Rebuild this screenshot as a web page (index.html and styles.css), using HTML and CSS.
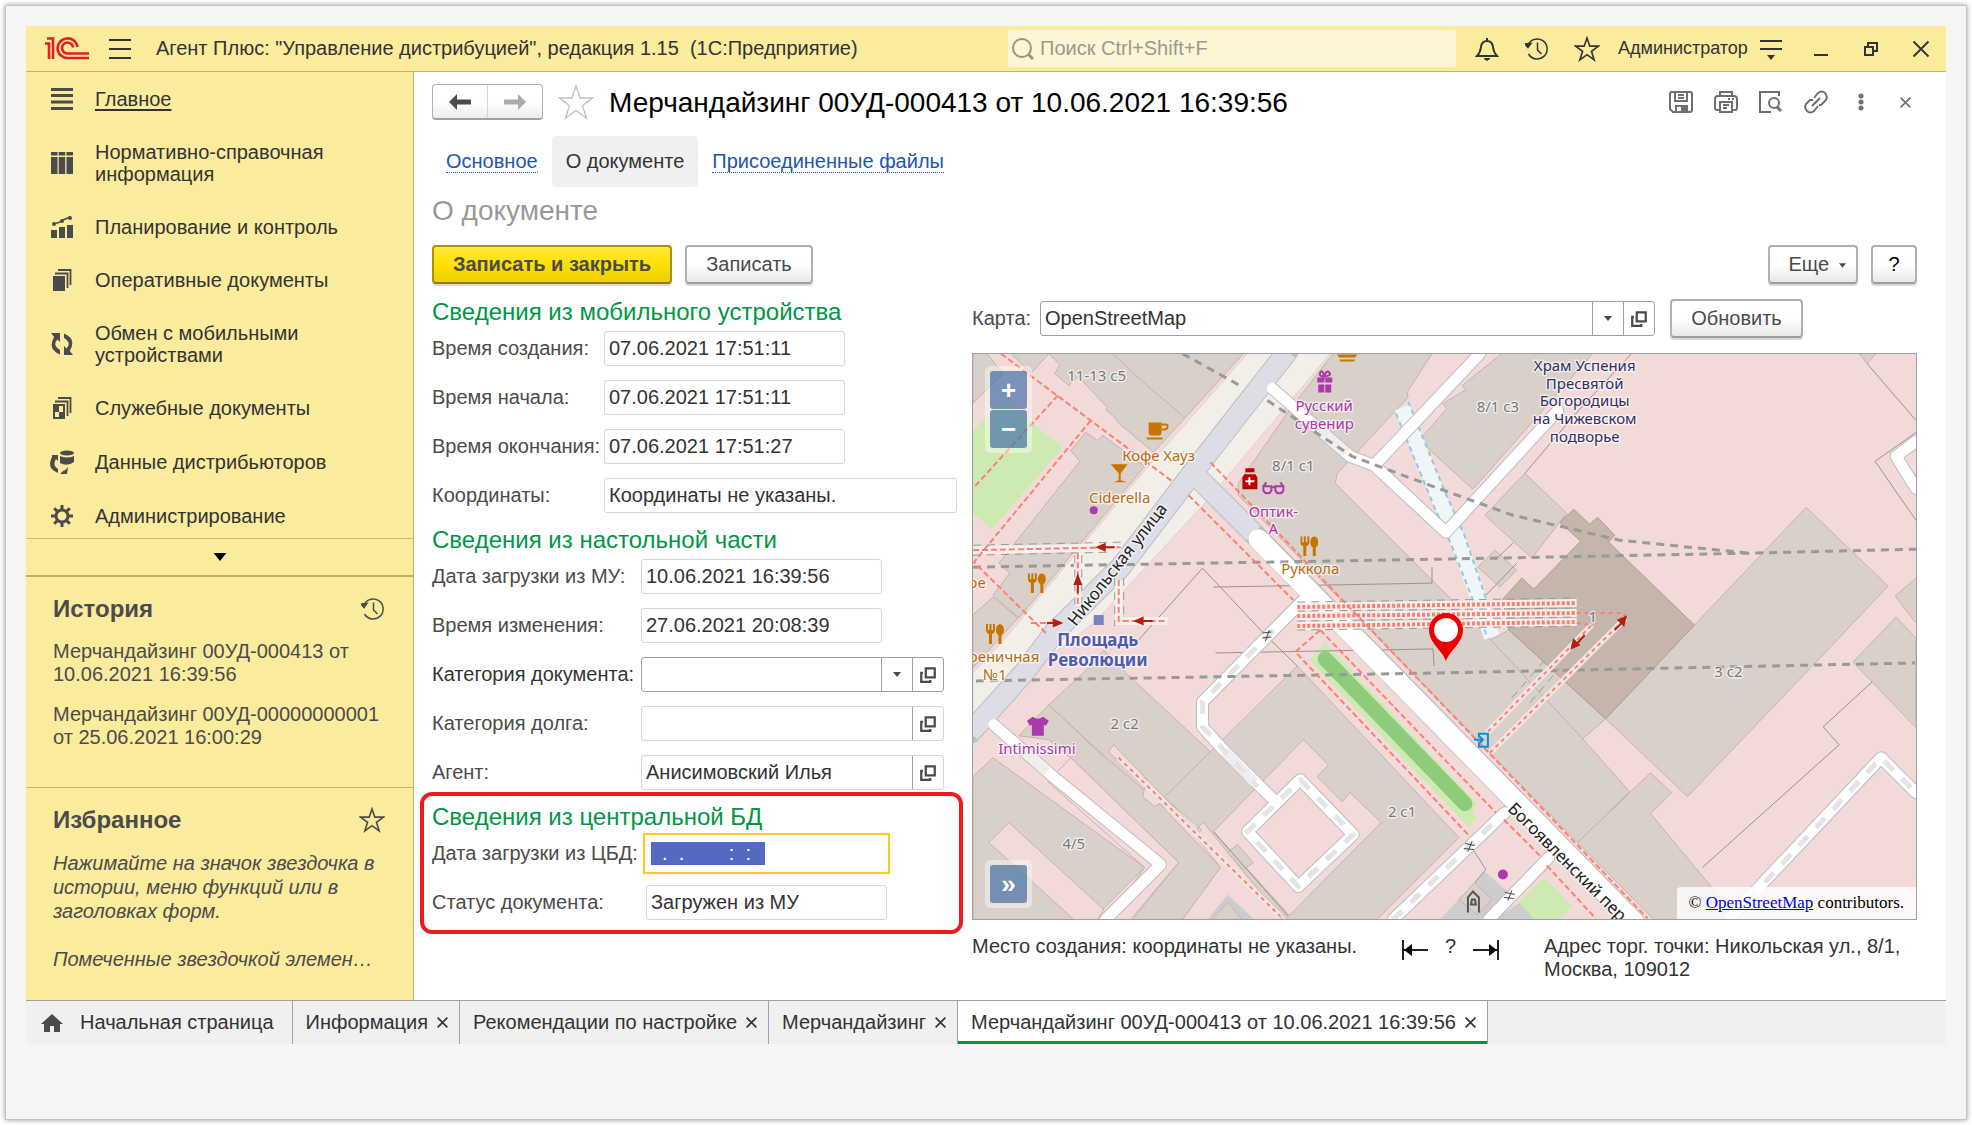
FILE: index.html
```html
<!DOCTYPE html>
<html lang="ru">
<head>
    <meta charset="UTF-8">
    <title>Агент Плюс: Управление дистрибуцией</title>
    <link rel="stylesheet" href="styles.css">
</head>
<body>
    <!-- Shared icons -->
    <svg class="sprite" width="0" height="0">
        <symbol id="i-star" viewBox="0 0 24 24"><path d="M12 1.8l2.6 7.6h8l-6.5 4.7 2.5 7.9-6.6-4.8L5.400 22l2.500-7.900L1.400 9.400h8z"/></symbol>
        <symbol id="i-history" viewBox="0 0 24 24"><path d="M2.600 9A10 10 0 1 1 3.500 17M12.500 5.500V13l4 4"/><path d="M0 7l6-.500-3 4z" fill="currentColor"/></symbol>
        <symbol id="i-close" viewBox="0 0 16 16"><path d="M2 2l12 12M14 2L2 14"/></symbol>
        <symbol id="i-open" viewBox="0 0 16 16"><path d="M6 2h8v8H6zM3.500 6H2v8h8v-1.500"/></symbol>
        <symbol id="i-down" viewBox="0 0 8 5"><path d="M0 0h8L4 5z"/></symbol>
        <symbol id="m-food" viewBox="0 0 18 20"><path d="M0 0h2v6h1.500V0h2v6H7V0h2v6q0 3-3 4v10H3V10Q0 9 0 6z"/><path d="M14 0q4 1 4 6 0 4-2.500 5v9h-3v-9Q10 10 10 6q0-5 4-6z"/></symbol>
    </svg>

    <div class="page">
        <div class="window">
            <header class="topbar">
                <svg class="logo" width="44" height="23" viewBox="0 0 44 23" fill="none" stroke="#e31e24" stroke-width="2.600">
                    <path d="M0 6.500h4V22M2 1.500h6V22"/>
                    <path d="M32.500 10A10 9.800 0 1 0 23 21H44M28 10.500A5.500 5.500 0 1 0 23 16.500H44"/>
                </svg>
                <button class="icon-btn burger" aria-label="Меню">
                    <svg width="22" height="22" viewBox="0 0 22 22" stroke="currentColor" stroke-width="2"><path d="M0 2h22M0 11h22M0 20h22"/></svg>
                </button>
                <span class="app-title">Агент Плюс: "Управление дистрибуцией", редакция 1.15&nbsp; (1С:Предприятие)</span>
                <div class="search">
                    <svg width="22" height="24" viewBox="0 0 22 24" fill="none" stroke="#9a9581" stroke-width="2"><circle cx="10" cy="11" r="9"/><path d="M16 17l5 5" stroke-width="3"/></svg>
                    <input type="text" placeholder="Поиск Ctrl+Shift+F" aria-label="Поиск">
                </div>
                <button class="icon-btn" aria-label="Уведомления">
                    <svg width="24" height="24" viewBox="0 0 24 24" fill="none" stroke="currentColor" stroke-width="2"><path d="M2 19h20c-3-3-3.500-5-4-9-.500-4-2.500-6-6-6s-5.500 2-6 6c-.500 4-1 6-4 9zM12 1v3"/><path d="M9 21.500h6l-3 2z" fill="currentColor" stroke-width="1"/></svg>
                </button>
                <button class="icon-btn" aria-label="История"><svg class="line" width="24" height="24"><use href="#i-history"/></svg></button>
                <button class="icon-btn" aria-label="Избранное"><svg class="line" width="26" height="26"><use href="#i-star"/></svg></button>
                <a href="#" class="user">Администратор</a>
                <button class="icon-btn" aria-label="Сервис">
                    <svg width="22" height="22" viewBox="0 0 22 22" stroke="currentColor" stroke-width="2"><path d="M0 3h22M0 11h22"/><path d="M7 17h8l-4 5z" fill="currentColor" stroke="none"/></svg>
                </button>
                <button class="icon-btn" aria-label="Свернуть">
                    <svg width="14" height="16" viewBox="0 0 14 16" stroke="currentColor" stroke-width="2"><path d="M0 14h14"/></svg>
                </button>
                <button class="icon-btn" aria-label="Развернуть">
                    <svg width="14" height="14" viewBox="0 0 14 14" fill="none" stroke="currentColor" stroke-width="2"><path d="M1 5h8v8H1zM4 5V1h9v8H9"/></svg>
                </button>
                <button class="icon-btn" aria-label="Закрыть"><svg class="line" width="20" height="20"><use href="#i-close"/></svg></button>
            </header>

            <div class="workspace">
                <aside class="sidebar">
                    <nav class="sections">
                        <a href="#" class="section-link current">
                            <svg width="22" height="22" viewBox="0 0 22 22"><path d="M0 0h22v3H0zM0 6h22v3H0zM0 12.500h22v3H0zM0 19h22v3H0z"/></svg>
                            <span>Главное</span>
                        </a>
                        <a href="#" class="section-link">
                            <svg width="22" height="22" viewBox="0 0 22 22"><path d="M0 0h6.500v3.500H0zM7.700 0h6.500v3.500H7.700zM15.500 0H22v3.500h-6.500zM0 5h6.500v17H0zM7.700 5h6.500v17H7.700zM15.500 5H22v17h-6.500z"/></svg>
                            <span>Нормативно-справочная информация</span>
                        </a>
                        <a href="#" class="section-link">
                            <svg width="22" height="22" viewBox="0 0 22 22"><path d="M0 14h6v8H0zM8 11h6v11H8zM16 9h6v13h-6z"/><path d="M3 8l6-2 3-2 7-3" fill="none" stroke="#4b4b4b" stroke-width="1.500"/><circle cx="3" cy="8" r="2"/><circle cx="11" cy="5" r="2"/><circle cx="19" cy="2" r="2"/></svg>
                            <span>Планирование и контроль</span>
                        </a>
                        <a href="#" class="section-link">
                            <svg width="22" height="22" viewBox="0 0 22 22"><path d="M2 7h12v15H2z"/><path d="M4 4.500h12.500V19M7 1h12.500v15" fill="none" stroke="#4b4b4b" stroke-width="1.800"/></svg>
                            <span>Оперативные документы</span>
                        </a>
                        <a href="#" class="section-link">
                            <svg width="22" height="22" viewBox="0 0 22 22"><path d="M0 0h9v9L6.500 6.500Q1 12 9 17v4.500Q-4 16 3.200 4zM22 22h-9v-9l2.500 2.500Q21 10 13 5V.500Q26 6 18.800 18z"/></svg>
                            <span>Обмен с мобильными устройствами</span>
                        </a>
                        <a href="#" class="section-link">
                            <svg width="22" height="22" viewBox="0 0 22 22"><path d="M2 7h12v15H2z"/><path d="M8 9h4v6H8zM4 15h4v5H4z" fill="#fbeb9d"/><path d="M4 4.500h12.500V19M7 1h12.500v15" fill="none" stroke="#4b4b4b" stroke-width="1.800"/></svg>
                            <span>Служебные документы</span>
                        </a>
                        <a href="#" class="section-link">
                            <svg width="24" height="24" viewBox="0 0 24 24"><ellipse cx="17" cy="3" rx="7" ry="2.500"/><path d="M10 6q7 3 14 0v6q-7 5-14 1zM2 5h6v6L6 9q-4 6 2 10v4Q-4 18 2 7zM18 17l-1 7h-7l3-3q3-1 5-4z"/></svg>
                            <span>Данные дистрибьюторов</span>
                        </a>
                        <a href="#" class="section-link">
                            <svg width="22" height="22" viewBox="0 0 22 22"><circle cx="11" cy="11" r="6" fill="none" stroke="#4b4b4b" stroke-width="3"/><path d="M11 0v4M11 18v4M0 11h4M18 11h4M3.200 3.200l3 3M15.800 15.800l3 3M3.200 18.800l3-3M15.800 6.200l3-3" stroke="#4b4b4b" stroke-width="3"/></svg>
                            <span>Администрирование</span>
                        </a>
                    </nav>
                    <button class="more-sections" aria-label="Еще разделы"><svg width="14" height="8"><use href="#i-down"/></svg></button>

                    <section class="side-block history">
                        <div class="side-head">
                            <h2>История</h2>
                            <svg class="line" width="24" height="24"><use href="#i-history"/></svg>
                        </div>
                        <a href="#">Мерчандайзинг 00УД-000413 от 10.06.2021 16:39:56</a>
                        <a href="#">Мерчандайзинг 00УД-00000000001 от 25.06.2021 16:00:29</a>
                    </section>

                    <section class="side-block favorites">
                        <div class="side-head">
                            <h2>Избранное</h2>
                            <svg class="line" width="26" height="26"><use href="#i-star"/></svg>
                        </div>
                        <p>Нажимайте на значок звездочка в истории, меню функций или в заголовках форм.</p>
                        <p class="clipped">Помеченные звездочкой элементы появятся здесь.</p>
                    </section>
                </aside>

                <main class="document">
                    <div class="doc-head">
                        <div class="nav-buttons">
                            <button aria-label="Назад"><svg width="22" height="16" viewBox="0 0 22 16"><path d="M0 8l8-8v5.500h14v5H8V16z" fill="#4b4b4b"/></svg></button>
                            <button aria-label="Вперед"><svg width="22" height="16" viewBox="0 0 22 16"><path d="M22 8l-8-8v5.500H0v5h14V16z" fill="#aaaaaa"/></svg></button>
                        </div>
                        <button class="fav-btn" aria-label="В избранное"><svg width="36" height="36" viewBox="0 0 36 36" fill="none" stroke="#bcc0c6" stroke-width="1.300"><path d="M18 2l4.200 12h12.300l-10 7.700 4 12.300L18 26.500 7.500 34l4-12.300-10-7.700h12.300z"/></svg></button>
                        <h1>Мерчандайзинг 00УД-000413 от 10.06.2021 16:39:56</h1>
                        <div class="doc-tools">
                            <button aria-label="Сохранить"><svg width="24" height="22" viewBox="0 0 24 22"><path d="M3 1h18q2 0 2 2v16q0 2-2 2H4l-3-3V3q0-2 2-2zM6 1v9h12V1M9 4h6M9 7h6M7 21v-6h11v6"/><path d="M13 16h3v4h-3z" fill="#6f6f6f"/></svg></button>
                            <button aria-label="Печать"><svg width="24" height="22" viewBox="0 0 24 22"><path d="M6 5V1h12v4M6 19H3q-2 0-2-2V8q0-3 3-3h16q3 0 3 3v9q0 2-2 2h-3M6 11h12v10H6zM9 14h6M9 17h4M14 8h2M18 8h2"/></svg></button>
                            <button aria-label="Просмотр"><svg width="24" height="22" viewBox="0 0 24 22"><path d="M20 5V1H1v20h11"/><circle cx="15" cy="12" r="5"/><path d="M18 16l4 4" stroke-width="3"/></svg></button>
                            <button aria-label="Ссылка"><svg width="24" height="24" viewBox="0 0 24 24"><path d="M10 8l4-5q4-3 7 0t1 7l-5 5h-2M14 16l-4 5q-4 3-7 0t-1-7l4-4h3M8 16l8-8"/></svg></button>
                            <button aria-label="Еще"><svg width="6" height="18" viewBox="0 0 6 18" class="dots"><circle cx="3" cy="3" r="2.500"/><circle cx="3" cy="9" r="2.500"/><circle cx="3" cy="15" r="2.500"/></svg></button>
                            <button aria-label="Закрыть"><svg width="13" height="13"><use href="#i-close"/></svg></button>
                        </div>
                    </div>

                    <nav class="doc-tabs">
                        <a href="#"><span>Основное</span></a>
                        <a href="#" class="active">О документе</a>
                        <a href="#"><span>Присоединенные файлы</span></a>
                    </nav>

                    <h2 class="subtitle">О документе</h2>

                    <div class="commands">
                        <button class="btn btn-primary">Записать и закрыть</button>
                        <button class="btn">Записать</button>
                        <button class="btn btn-more">Еще <svg width="7" height="5"><use href="#i-down"/></svg></button>
                        <button class="btn btn-help">?</button>
                    </div>

                    <div class="doc-body">
                        <form class="details">
                            <div class="group mobile">
                                <h3>Сведения из мобильного устройства</h3>
                                <div class="row"><label for="created">Время создания:</label><input id="created" class="field" type="text" value="07.06.2021 17:51:11" readonly></div>
                                <div class="row"><label for="started">Время начала:</label><input id="started" class="field" type="text" value="07.06.2021 17:51:11" readonly></div>
                                <div class="row"><label for="ended">Время окончания:</label><input id="ended" class="field" type="text" value="07.06.2021 17:51:27" readonly></div>
                                <div class="row"><label for="coords">Координаты:</label><input id="coords" class="field wide" type="text" value="Координаты не указаны." readonly></div>
                            </div>

                            <div class="group desktop">
                                <h3>Сведения из настольной части</h3>
                                <div class="row"><label for="loaded">Дата загрузки из МУ:</label><input id="loaded" class="field" type="text" value="10.06.2021 16:39:56" readonly></div>
                                <div class="row"><label for="changed">Время изменения:</label><input id="changed" class="field" type="text" value="27.06.2021 20:08:39" readonly></div>
                                <div class="row">
                                    <label for="category" class="editable">Категория документа:</label>
                                    <div class="combo editable">
                                        <select id="category"><option></option></select>
                                        <span class="combo-part"><svg width="8" height="5"><use href="#i-down"/></svg></span>
                                        <button type="button" class="combo-part" aria-label="Открыть"><svg class="open" width="18" height="18"><use href="#i-open"/></svg></button>
                                    </div>
                                </div>
                                <div class="row">
                                    <label for="debt">Категория долга:</label>
                                    <div class="combo">
                                        <input id="debt" type="text" readonly>
                                        <button type="button" class="combo-part" aria-label="Открыть"><svg class="open" width="18" height="18"><use href="#i-open"/></svg></button>
                                    </div>
                                </div>
                                <div class="row">
                                    <label for="agent">Агент:</label>
                                    <div class="combo">
                                        <input id="agent" type="text" value="Анисимовский Илья" readonly>
                                        <button type="button" class="combo-part" aria-label="Открыть"><svg class="open" width="18" height="18"><use href="#i-open"/></svg></button>
                                    </div>
                                </div>
                            </div>

                            <div class="group central">
                                <h3>Сведения из центральной БД</h3>
                                <div class="row"><label for="central-date">Дата загрузки из ЦБД:</label><div class="focused"><input id="central-date" type="text" value="  .  .        :  :  "></div></div>
                                <div class="row"><label for="status">Статус документа:</label><input id="status" class="field" type="text" value="Загружен из МУ" readonly></div>
                            </div>
                        </form>

                        <div class="map-side">
                            <div class="map-bar">
                                <label for="provider">Карта:</label>
                                <div class="combo editable">
                                    <select id="provider"><option>OpenStreetMap</option></select>
                                    <span class="combo-part"><svg width="8" height="5"><use href="#i-down"/></svg></span>
                                    <button class="combo-part" aria-label="Открыть"><svg class="open" width="18" height="18"><use href="#i-open"/></svg></button>
                                </div>
                                <button class="btn btn-refresh">Обновить</button>
                            </div>

                            <div class="map">
                                <svg class="map-canvas" viewBox="0 0 945 567" preserveAspectRatio="xMidYMid slice">
                                    <rect width="945" height="567" fill="#f2dad9"/>

                                    <!-- buildings -->
                                    <g class="building">
                                        <path d="M0 0h14l16 20L0 50zM38 0h38L58 20z"/>
                                        <path d="M76 0l11 11-5 9 14 12 9-9 30 31-2 2 10 9 2 4 36 30L271 0z"/>
                                        <path d="M140 0l31 29 41 35"/>
                                        <path d="M113 79l12 8 5-5 42 31L46 265l-26-23 17-22-11-10 81-102-9-11z"/>
                                        <path d="M20 244l25 21-45 50v-53z"/>
                                        <path d="M361 0h99l-25 39 1 5-71 76-2 10 107 107 49 50 92 99 47 53-52 51L266 142v-12l50-72z"/>
                                        <path d="M530 0l-40 32 4 4-23 14 4 5-28 32 54 49L621 0z"/>
                                        <path d="M553 120l42 40-35 45-47-43zM523 197l22 20-17 17-22-20z"/>
                                        <path d="M537 277l97 89-23 20-92-99z"/>
                                        <path d="M835 154l82 79-51 54-150 157-82-78 89-94zM945 225l-21 18 21 27M925 264l20 21v90l-63-66zM888 0l8 10 9-10z"/>
                                        <path d="M679 420l21 20-21 21 88 106h-85l-76-77z"/>
                                        <path d="M76 352l42-39 13-16 22 23 85 79 87-86 162 172-82 82H316L210 465l-20-12-14-2-45-48z"/>
                                        <path d="M238 399l-46 45"/>
                                        <path d="M0 424l20-19 152 110-42 42-10 10H0z"/>
                                        <path d="M76 352l54 51 6 4 50 43 62 65-38 52h-50l46-57L98 405l-22-18-30-4z"/>
                                    </g>
                                    <g class="yard">
                                        <path d="M331 387l25 25-11 12 25 25 8-9 31 30-92 93-76-84z"/>
                                        <path d="M36 470l95 87-6 10h-24L16 490z"/>
                                        <path d="M141 392l-5 7 24 24 14 3-4 18 12 10 12-7 35 30-6 7 25 31-38 52h100L231 470l-8 7z"/>
                                        <path d="M98 405l108 105-48 57h-23l37-52-97-86z"/>
                                    </g>
                                    <path class="building" d="M265 492l16 18-10 7-16-17z"/>
                                    <path class="church" d="M602 156l16 15 8-7 17 18-6 7 86 83-89 94-97-89-6-31 19-21 12 11 47-48-21-19z"/>
                                    <path d="M255 542l-20 25h47zM513 519l-45 48h40l33-23zM550 549l-28 18h48z" fill="#cdcdcd"/>
                                    <path class="building" d="M503 530l17 17-15 15-18-15zM255 550l-15 17h30z"/>

                                    <!-- greenery -->
                                    <path d="M31 47l59 47-71 82-19-16V77zM353 290l-16 17 160 168 8-10-6-6 6-8zM573 525l28 29-13 13h-26l-15-18z" fill="#cdebb0"/>
                                    <path d="M353 306l140 145" stroke="#8ecb7b" stroke-width="15" stroke-linecap="round"/>

                                    <!-- Nikolskaya street -->
                                    <path d="M275 0l-97 110L31 287 0 320v74l20-24 48-60 53-40 114-123L358 0z" fill="#f2efe9" stroke="#ddd3cd"/>
                                    <g class="thin"><path d="M241 234l219-4v-16M243 300l218-4 1 17M166 287l64-72 61 65 34 33M241 479l75 85M896 10l49 57M945 79l-41 29 41 59M660 0l-55 59-52 61M541 190l-18 17M545 210l-60 62M901 329l-49 45 16 18-137 123M499 494l15 23-11 13"/></g>

                                    <!-- glass passage -->
                                    <path d="M430 54l38 93 18 40 34 97" stroke="#f0f6f7" stroke-width="16" fill="none"/>
                                    <path d="M436 48l38 93 18 40 26 76M424 60l38 93 18 40 35 90" stroke="#8fcbdc" stroke-width="2" stroke-dasharray="5 4" fill="none"/>

                                    <!-- roads -->
                                    <g class="casing">
                                        <path d="M315-2l-93 119-74 97-67 66-30 40-54 60" stroke-width="22"/>
                                        <path d="M221 120l60 60 373 381 8 8" stroke-width="22"/>
                                        <path d="M300 35l78 68 24 9L508 0M402 112l72 67L586 57M945 88l-20 15 20 32" stroke-width="13"/>
                                        <path d="M21 372l57 50 110 90-55 55M331 247l-101 102v25l18 20 52 52M328 427l53 55-55 52-51-55zM533 460l-112 107M577 505l-60 62M945 440l-35-35-151 160" stroke-width="13"/>
                                    </g>
                                    <path d="M315-2l-93 119-74 97-67 66-30 40-54 60M221 120l60 60" stroke="#dddde8" stroke-width="20" fill="none"/>
                                    <g class="road">
                                        <path d="M286 186l368 375 8 8" stroke-width="20"/>
                                        <path d="M300 35l78 68 24 9L508 0M402 112l72 67L586 57M945 88l-20 15 20 32" stroke-width="11"/>
                                        <path d="M21 372l57 50 110 90-55 55M331 247l-101 102v25l18 20 52 52M328 427l53 55-55 52-51-55zM533 460l-112 107M577 505l-60 62M945 440l-35-35-151 160" stroke-width="11"/>
                                    </g>
                                    <path d="M338 68l36 31M46 394l28 25M252 398l30 32" stroke="#eeeeee" stroke-width="10"/>
                                    <path d="M301 277l-71 72v25l55 60M328 427l53 55-55 52-51-55zM520 472l-99 95M940 435l-30-30-140 150" stroke="#e4e4e4" stroke-width="5" stroke-dasharray="13 12" fill="none"/>

                                    <!-- metro and railway tunnels -->
                                    <g class="rail">
                                        <path d="M210 0l61 34M295 47l85 56 78 29 83 30 107 25 130 13M0 214l468-8 310-6 167-4M3 328l465-8 476-10"/>
                                    </g>
                                    <g class="platform-back"><path d="M325 254l280-4M325 263l280-3M325 273l280-4M0 197l148-3M105 200v53M146 227v41h49"/></g>
                                    <g class="rail">
                                        <path d="M0 192l148-3M0 202l140-3M102 202v50M109 202v50M142 225v48M151 225v38M325 249l280-4M325 258l280-3M325 268l280-4M325 277l280-4M540 345l35-40M558 350l30-35" stroke-width="1"/>
                                    </g>
                                    <g class="platform"><path d="M325 254l280-4M325 263l280-3M325 273l280-4"/></g>

                                    <!-- footways -->
                                    <g class="path-back"><path d="M515 380L620 272M518 400L654 265M146 405l162 159"/></g>
                                    <g class="path">
                                        <path d="M28 0l173 129M85 42L1 134M118 67L1 209l74 73M238 109l438 457M216 142l105 105M348 277l-25 22 175 185M348 277l120 125 56 58M532 467l38 38M575 513l49 53"/>
                                        <path d="M0 197l148-3M105 200v53M146 227v41h49M58 270h30"/>
                                        <path d="M146 405l162 159M605 260h47l2 5-136 135M605 270l15 2-105 108" stroke-dasharray="4 4"/>
                                    </g>
                                    <g stroke="#b5200d" fill="#b5200d" stroke-width="2">
                                        <path d="M142 194h-14M105 240v-12M74 270h8M180 268h-12M643 277l8-8M613 282l-9 10"/>
                                        <path d="M125 194l7-3v6zM105 223l-3 8h6zM88 270l-7-3v6zM163 268l7-3v6zM654 264l-2 8-5-5zM600 295l2-8 5 5z"/>
                                    </g>
                                    <path d="M290 280l9-1M290 285l9-1M293 288l4-11M493 491l10 2M492 496l10 1M496 499l4-10M533 540l10 2M532 545l10 1M536 548l4-10" stroke="#444444"/>

                                    <!-- points of interest -->
                                    <g fill="#c77400">
                                        <use href="#m-food" x="328" y="183" width="18" height="20"/>
                                        <use href="#m-food" x="55" y="220" width="18" height="20"/>
                                        <use href="#m-food" x="13" y="271" width="18" height="20"/>
                                        <path d="M176 69h13v10q0 3-3 3h-7q-3 0-3-3zM174 84h16v2h-16zM138 111h17l-7 9v7l6 2h-13l5-2v-7zM365 1h20l-2 3h-16zM367 6h16l-1 2h-14z"/>
                                        <path d="M189 71h4q2 0 2 2t-2 3h-4" fill="none" stroke="#c77400" stroke-width="2"/>
                                    </g>
                                    <g fill="#ac39ac">
                                        <path d="M345 24h7v5h-7zM353 24h7v5h-7zM346 31h6v8h-6zM353 31h6v8h-6zM60 364q5 4 10 0l6 4-3 5-2-1v11H59v-11l-2 1-3-5z"/>
                                        <path d="M352 23q-6 0-4-4t4 4q2-7 5-4t-5 4M291 133l3-4M311 133l-3-4M291 133h8v4q-1 3-4 3t-4-3zM303 133h8v4q-1 3-4 3t-4-3zM299 134h4" fill="none" stroke="#ac39ac" stroke-width="2"/>
                                        <circle cx="121" cy="157" r="4"/><circle cx="531" cy="522" r="5"/>
                                    </g>
                                    <path d="M273 115h9v4h-9zM272 121h11l2 3v12h-15v-12z" fill="#bf0000"/>
                                    <path d="M277 124v8M273 128h9" stroke="#ffffff" stroke-width="2"/>
                                    <path d="M121 262h10v10h-10z" fill="#7b81bf"/>
                                    <path d="M507 385v-4h9v13h-9v-4M502 387h9M508 384l3 3-3 3" stroke="#0092da" stroke-width="2" fill="none"/>
                                    <path d="M496 560v-15l5-6 6 6v15M499 552h5l-1-5h-3z" stroke="#555555" stroke-width="2" fill="none"/>

                                    <!-- labels -->
                                    <g class="map-text">
                                        <g class="house">
                                            <text x="124" y="27">11-13 с5</text>
                                            <text x="321" y="118">8/1 с1</text>
                                            <text x="526" y="59">8/1 с3</text>
                                            <text x="621" y="269">1</text>
                                            <text x="152" y="376">2 с2</text>
                                            <text x="430" y="464">2 с1</text>
                                            <text x="101" y="496">4/5</text>
                                            <text x="757" y="324">3 с2</text>
                                        </g>
                                        <g class="cafe">
                                            <text x="186" y="108">Кофе Хауз</text>
                                            <text x="147" y="150">Ciderella</text>
                                            <text x="338" y="221">Руккола</text>
                                            <text x="4" y="235">ре</text>
                                            <text x="31" y="309">реничная</text>
                                            <text x="22" y="327">№1</text>
                                        </g>
                                        <g class="shop">
                                            <text x="352" y="58">Русский</text>
                                            <text x="352" y="76">сувенир</text>
                                            <text x="301" y="164">Оптик-</text>
                                            <text x="301" y="181">А</text>
                                            <text x="64" y="401">Intimissimi</text>
                                        </g>
                                        <g class="temple">
                                            <text x="613" y="17">Храм Успения</text>
                                            <text x="613" y="35">Пресвятой</text>
                                            <text x="613" y="53">Богородицы</text>
                                            <text x="613" y="71">на Чижевском</text>
                                            <text x="613" y="89">подворье</text>
                                        </g>
                                        <g class="metro">
                                            <text x="125" y="293">Площадь</text>
                                            <text x="125" y="313">Революции</text>
                                        </g>
                                        <g class="street">
                                            <text transform="translate(103 274) rotate(-52)">Никольская улица</text>
                                            <text transform="translate(535 457) rotate(45)">Богоявленский пер.</text>
                                        </g>
                                    </g>

                                    <path d="M474 308c-4-11-17-18-17-31a17 17 0 0 1 34 0c0 13-13 20-17 31z" fill="#ee0000"/>
                                    <circle cx="474" cy="277" r="12" fill="#ffffff"/>
                                </svg>

                                <div class="map-ctrl zoom">
                                    <button aria-label="Приблизить">+</button>
                                    <button aria-label="Отдалить">−</button>
                                </div>
                                <div class="map-ctrl overview"><button aria-label="Обзор">»</button></div>
                                <div class="attribution">© <a href="#">OpenStreetMap</a> contributors.</div>
                            </div>

                            <div class="map-foot">
                                <span class="place">Место создания: координаты не указаны.</span>
                                <div class="steps">
                                    <svg width="26" height="20" viewBox="0 0 26 20"><path d="M1 0v20M2 10h24" stroke="#222222" stroke-width="2"/><path d="M2 10l8-6v12z"/></svg>
                                    <span>?</span>
                                    <svg width="26" height="20" viewBox="0 0 26 20"><path d="M25 0v20M0 10h24" stroke="#222222" stroke-width="2"/><path d="M24 10l-8-6v12z"/></svg>
                                </div>
                                <span class="address">Адрес торг. точки: Никольская ул., 8/1, Москва, 109012</span>
                            </div>
                        </div>
                    </div>
                </main>
            </div>

            <nav class="open-tabs">
                <a href="#" class="open-tab home">
                    <svg width="22" height="18" viewBox="0 0 22 18"><path d="M11 0L0 10h3v8h6v-6h4v6h6v-8h3z" fill="#4b4b4b"/></svg>
                    Начальная страница
                </a>
                <a href="#" class="open-tab">Информация <svg class="line" width="13" height="13"><use href="#i-close"/></svg></a>
                <a href="#" class="open-tab">Рекомендации по настройке <svg class="line" width="13" height="13"><use href="#i-close"/></svg></a>
                <a href="#" class="open-tab">Мерчандайзинг <svg class="line" width="13" height="13"><use href="#i-close"/></svg></a>
                <a href="#" class="open-tab active">Мерчандайзинг 00УД-000413 от 10.06.2021 16:39:56 <svg class="line" width="13" height="13"><use href="#i-close"/></svg></a>
            </nav>
        </div>
    </div>
</body>
</html>
```
FILE: styles.css
```css
:root {
    --yellow: #fbeb9d;
    --yellow-line: #c3b25f;
    --green: #009646;
    --text: #333333;
    --label: #4b4b4b;
    --field-line: #d5d5d5;
    --strong-line: #a0a0a0;
}

* {
    margin: 0;
    padding: 0;
    box-sizing: border-box;
}

body {
    background-color: #ffffff;
    color: var(--text);
    font-family: "Liberation Sans", Arial, sans-serif;
    font-size: 20px;
    line-height: 23px;
    padding: 5px;
}

button, input, select {
    font: inherit;
    color: inherit;
    border: none;
    background: none;
    outline: none;
}

button {
    cursor: pointer;
}

a {
    color: inherit;
    text-decoration: none;
}

.sprite {
    position: absolute;
}

.line {
    fill: none;
    stroke: currentColor;
    stroke-width: 2;
}

/* ========== Frame ========== */
.page {
    min-height: calc(100vh - 10px);
    padding: 20px;
    background-color: #f6f5f3;
    border: 1px solid #c4c4c4;
    box-shadow: 0 0 5px rgba(0, 0, 0, 0.4);
}

.window {
    background-color: #ffffff;
}

/* ========== Top bar ========== */
.topbar {
    display: flex;
    align-items: center;
    height: 46px;
    padding-left: 19px;
    background-color: var(--yellow);
    border-bottom: 1px solid var(--yellow-line);
}

.icon-btn {
    display: flex;
    justify-content: center;
    align-items: center;
    width: 50px;
    height: 44px;
}

.icon-btn .line {
    stroke-width: 1.5;
}

.burger {
    width: 62px;
}

.app-title {
    flex: 1;
    padding-left: 5px;
    white-space: nowrap;
}

.search {
    display: flex;
    align-items: center;
    gap: 6px;
    width: 448px;
    height: 37px;
    margin-right: 6px;
    padding-left: 4px;
    background-color: #fdf5d3;
    border-radius: 2px;
}

.search input {
    flex: 1;
}

.search input::placeholder {
    color: #9a9a92;
}

.user {
    width: 134px;
    padding-left: 6px;
    font-size: 18px;
}

/* ========== Sidebar ========== */
.workspace {
    display: flex;
}

.sidebar {
    display: flex;
    flex-direction: column;
    width: 388px;
    background-color: var(--yellow);
    border-right: 1px solid var(--yellow-line);
}

.sections {
    height: 466px;
    overflow: hidden;
}

.section-link {
    display: flex;
    align-items: center;
    padding: 16px 60px 15px 24px;
    line-height: 22px;
}

.section-link svg {
    flex: none;
    width: 24px;
    margin-right: 21px;
    fill: var(--label);
}

.section-link.current span {
    text-decoration: underline;
    text-underline-offset: 3px;
}

.more-sections {
    height: 39px;
    border-top: 1px solid #cdbd72;
    border-bottom: 2px solid #bfae5a;
    line-height: 0;
}

.side-block {
    padding: 18px 28px 0 27px;
    color: var(--label);
}

.history {
    height: 211px;
    border-bottom: 1px solid var(--yellow-line);
}

.side-head {
    display: flex;
    justify-content: space-between;
    align-items: center;
    margin-bottom: 18px;
}

.side-head h2 {
    font-size: 24px;
    line-height: 27px;
}

.side-head .line {
    stroke-width: 1.5;
}

.history a {
    display: block;
    margin-bottom: 17px;
}

.favorites p {
    font-style: italic;
    line-height: 24px;
    margin-bottom: 24px;
}

.favorites .clipped {
    overflow: hidden;
    text-overflow: ellipsis;
    white-space: nowrap;
    margin-bottom: 0;
}

/* ========== Document head ========== */
.document {
    flex: 1;
    min-width: 0;
    padding: 12px 29px 19px 18px;
}

.doc-head {
    display: flex;
    align-items: center;
    height: 36px;
}

.nav-buttons {
    display: flex;
    width: 111px;
    height: 36px;
    border: 1px solid #b0b0b0;
    border-bottom: 2px solid #a0a0a0;
    border-radius: 4px;
    background: linear-gradient(#ffffff 50%, #ececec);
}

.nav-buttons button {
    flex: 1;
    line-height: 0;
}

.nav-buttons button + button {
    border-left: 1px solid var(--field-line);
}

.fav-btn {
    width: 36px;
    margin: 0 15px;
    line-height: 0;
}

.doc-head h1 {
    flex: 1;
    color: #000000;
    font-size: 28px;
    font-weight: normal;
    white-space: nowrap;
}

.doc-tools {
    display: flex;
    margin-right: -11px;
}

.doc-tools button {
    display: flex;
    justify-content: center;
    align-items: center;
    width: 45px;
    height: 36px;
}

.doc-tools svg {
    fill: none;
    stroke: #6f6f6f;
    stroke-width: 2;
}

.doc-tools .dots {
    fill: #6f6f6f;
    stroke: none;
}

.doc-tabs {
    display: flex;
    margin-top: 16px;
}

.doc-tabs a {
    padding: 14px;
    color: #1d54b5;
}

.doc-tabs a span {
    border-bottom: 1px dotted #1d54b5;
}

.doc-tabs .active {
    background-color: #f0f0f0;
    border-radius: 4px;
    color: var(--text);
}

.subtitle {
    color: #999999;
    font-size: 28px;
    font-weight: normal;
    line-height: 48px;
}

/* ========== Buttons ========== */
.btn {
    height: 39px;
    border: 2px solid #b0b0b0;
    border-bottom-color: #9c9c9c;
    border-radius: 4px;
    background: linear-gradient(#ffffff 50%, #e8e8e8);
    box-shadow: 0 2px 0 #d9d9d9;
    color: var(--label);
    white-space: nowrap;
}

.btn-primary {
    width: 240px;
    border-color: #a89400;
    border-bottom-color: #8f7e00;
    background: linear-gradient(#ffe83c, #ffe000 50%, #ecd000);
    font-weight: bold;
}

.commands {
    display: flex;
    gap: 13px;
    margin-top: 10px;
}

.commands .btn:nth-child(2) {
    width: 128px;
}

.btn-more {
    width: 90px;
    margin-left: auto;
    padding-left: 8px;
}

.btn-more svg {
    margin-left: 4px;
    vertical-align: middle;
    fill: var(--label);
}

.btn-help {
    width: 46px;
    color: #000000;
}

/* ========== Form ========== */
.doc-body {
    display: grid;
    grid-template-columns: 540px 1fr;
    align-items: start;
    margin-top: 14px;
}

.group h3 {
    color: var(--green);
    font-size: 24px;
    font-weight: normal;
    line-height: 28px;
    margin-bottom: 5px;
    white-space: nowrap;
}

.row {
    display: flex;
    align-items: center;
    margin-bottom: 14px;
}

.row label {
    flex: none;
    width: 172px;
    color: var(--label);
    white-space: nowrap;
}

.row label.editable {
    color: var(--text);
}

.field {
    width: 241px;
    height: 35px;
    padding: 0 4px;
    border: 1px solid var(--field-line);
    border-radius: 3px;
}

.field.wide {
    width: 353px;
}

.desktop {
    margin-top: 13px;
}

.mobile .row:last-child,
.desktop .row:last-child,
.central .row:last-child {
    margin-bottom: 0;
}

.desktop .row label {
    width: 209px;
}

.combo {
    display: flex;
    width: 303px;
    height: 35px;
    border: 1px solid var(--field-line);
    border-radius: 3px;
}

.combo.editable {
    border-color: var(--strong-line);
}

.combo input,
.combo select {
    flex: 1;
    min-width: 0;
    padding: 0 4px;
    appearance: none;
}

.combo-part {
    display: flex;
    justify-content: center;
    align-items: center;
    width: 31px;
    border-left: 1px solid var(--strong-line);
    fill: var(--label);
}

.combo-part .open {
    fill: none;
    stroke: var(--label);
    stroke-width: 2;
}

.central {
    width: 543px;
    margin: 2px 0 0 -12px;
    padding: 7px 8px 10px;
    border: 4px solid #ed1c1c;
    border-radius: 12px;
}

.central h3 {
    margin-bottom: 2px;
}

.central .row {
    margin-bottom: 11px;
}

.central .row label {
    width: 214px;
}

.focused {
    width: 247px;
    height: 41px;
    margin-left: -3px;
    padding: 7px 6px;
    border: 2px solid #fccb1c;
}

.focused input {
    display: block;
    width: 114px;
    height: 23px;
    background-color: #5569c3;
    color: #ffffff;
    white-space: pre;
}

/* ========== Map ========== */
.map-bar {
    display: flex;
    align-items: center;
    height: 41px;
    margin-bottom: 14px;
}

.map-bar label {
    width: 68px;
    color: var(--label);
}

.map-bar .combo {
    width: 615px;
    margin-right: 15px;
}

.btn-refresh {
    width: 133px;
}

.map {
    position: relative;
    height: 567px;
    border: 1px solid var(--strong-line);
    overflow: hidden;
}

.map-canvas {
    display: block;
    width: 100%;
    height: 100%;
}

.building {
    fill: #d9d0c9;
    stroke: #c5b3a9;
}

.yard {
    fill: #f2dad9;
    stroke: #c5b3a9;
}

.church {
    fill: #c4b6ab;
    stroke: #ae9c90;
}

.thin {
    fill: none;
    stroke: #9a9090;
}

.casing {
    fill: none;
    stroke: #bfbcbc;
    stroke-linejoin: round;
    stroke-linecap: round;
}

.road {
    fill: none;
    stroke: #ffffff;
    stroke-linejoin: round;
    stroke-linecap: round;
}

.rail {
    fill: none;
    stroke: #999999;
    stroke-width: 3;
    stroke-dasharray: 8 6;
}

.platform-back {
    fill: none;
    stroke: #f7efec;
    stroke-width: 8;
}

.platform {
    fill: none;
    stroke: #fa8072;
    stroke-width: 4;
    stroke-dasharray: 3 2;
}

.path-back {
    fill: none;
    stroke: #f0e4e0;
    stroke-width: 6;
}

.path {
    fill: none;
    stroke: #fa8072;
    stroke-width: 2;
    stroke-dasharray: 6 3;
}

.map-text {
    font-family: "Noto Sans", sans-serif;
    font-size: 15px;
    text-anchor: middle;
    paint-order: stroke;
    stroke: rgba(255, 255, 255, 0.6);
    stroke-width: 3px;
    stroke-linejoin: round;
}

.house {
    fill: #777777;
}

.cafe {
    fill: #b86d10;
}

.shop {
    fill: #ac39ac;
}

.temple {
    fill: #2f2f62;
}

.metro {
    fill: #4d5bb0;
    font-size: 17px;
    font-weight: bold;
}

.street {
    fill: #222222;
    font-size: 17px;
    text-anchor: start;
}

.map-ctrl {
    position: absolute;
    left: 12px;
    width: 47px;
    padding: 5px;
    background-color: rgba(255, 255, 255, 0.4);
    border-radius: 5px;
}

.map-ctrl button {
    display: block;
    width: 37px;
    height: 38px;
    background-color: rgba(0, 60, 136, 0.5);
    border-radius: 3px;
    color: #ffffff;
    font-size: 26px;
    font-weight: bold;
}

.map-ctrl button + button {
    margin-top: 1px;
}

.zoom {
    top: 12px;
}

.overview {
    bottom: 11px;
}

.attribution {
    position: absolute;
    right: 0;
    bottom: 0;
    padding: 4px 12px 5px;
    background-color: rgba(255, 255, 255, 0.8);
    border-radius: 4px 0 0 0;
    color: #000000;
    font-family: "Liberation Serif", serif;
    font-size: 17px;
}

.attribution a {
    color: #0000ee;
    text-decoration: underline;
}

.map-foot {
    display: flex;
    justify-content: space-between;
    margin-top: 15px;
}

.steps {
    display: flex;
    gap: 17px;
}

.steps svg {
    margin-top: 5px;
}

.address {
    width: 373px;
}

/* ========== Open windows ========== */
.open-tabs {
    display: flex;
    height: 44px;
    background-color: #f0f0f0;
    border-top: 1px solid var(--strong-line);
}

.open-tab {
    display: flex;
    align-items: center;
    gap: 8px;
    padding: 0 10px 0 13px;
    border-right: 1px solid var(--strong-line);
    white-space: nowrap;
}

.open-tab.home {
    gap: 17px;
    padding: 0 18px 0 15px;
}

.open-tab.active {
    background-color: #ffffff;
    box-shadow: inset 0 -3px 0 var(--green);
}
```
